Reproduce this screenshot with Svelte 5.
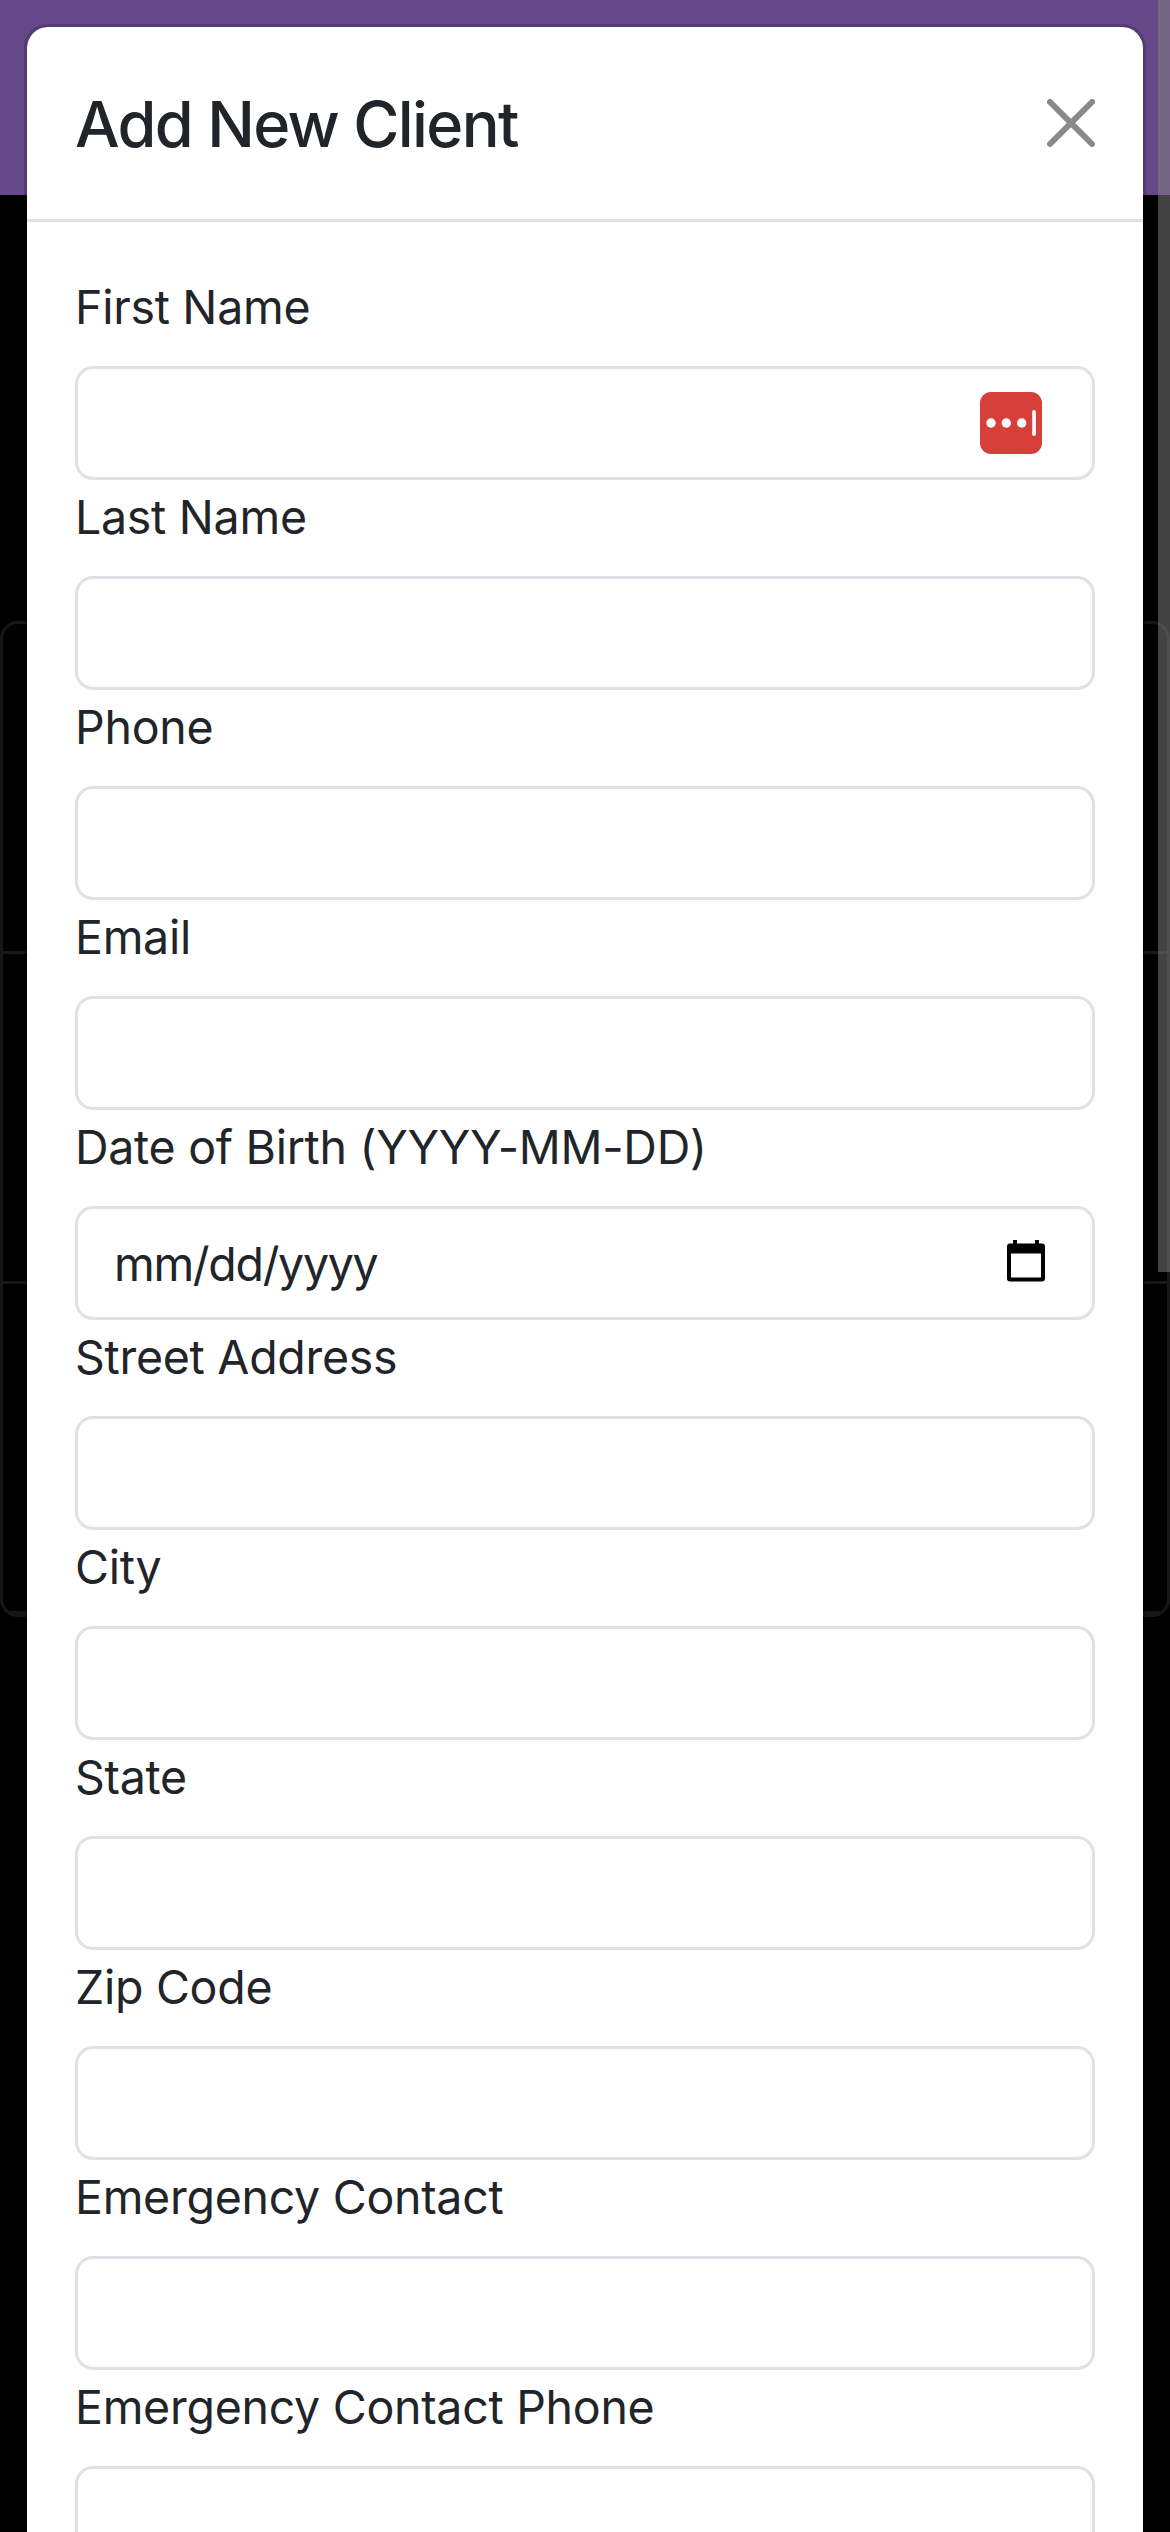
<script>
  const fields = [
    { label: 'First Name', kind: 'password-manager' },
    { label: 'Last Name' },
    { label: 'Phone' },
    { label: 'Email' },
    { label: 'Date of Birth (YYYY-MM-DD)', kind: 'date' },
    { label: 'Street Address' },
    { label: 'City' },
    { label: 'State' },
    { label: 'Zip Code' },
    { label: 'Emergency Contact' },
    { label: 'Emergency Contact Phone' },
  ];
</script>

<div class="screen">
  <div class="page">
    <div class="navbar"></div>
    <div class="card">
      <div class="card-row"></div>
      <div class="card-row"></div>
      <div class="card-row"></div>
    </div>
  </div>

  <div class="modal">
    <header class="modal-header">
      <h4 class="title">Add New Client</h4>
      <svg class="close" viewBox="0 0 16 16" aria-label="Close">
        <path d="M.293.293a1 1 0 0 1 1.414 0L8 6.586 14.293.293a1 1 0 1 1 1.414 1.414L9.414 8l6.293 6.293a1 1 0 0 1-1.414 1.414L8 9.414l-6.293 6.293a1 1 0 0 1-1.414-1.414L6.586 8 .293 1.707a1 1 0 0 1 0-1.414z" />
      </svg>
    </header>
    <div class="modal-body">
      {#each fields as field}
        <div class="label"><span>{field.label}</span></div>
        <div class="control">
          {#if field.kind === 'date'}
            <span class="value">mm/dd/yyyy</span>
            <svg class="calendar" viewBox="0 0 38 42">
              <path fill-rule="evenodd" d="M6 0h4v3.500h18V0h4v3.500h3a3 3 0 0 1 3 3V38.500a3 3 0 0 1-3 3H3a3 3 0 0 1-3-3V6.500a3 3 0 0 1 3-3h3zM4 13.500v24h30v-24z" />
            </svg>
          {:else if field.kind === 'password-manager'}
            <svg class="pm" viewBox="0 0 62 62">
              <rect width="62" height="62" rx="11" fill="#d73f3a" />
              <circle cx="11" cy="31" r="4.700" fill="#fff" />
              <circle cx="26.300" cy="31" r="4.700" fill="#fff" />
              <circle cx="41.700" cy="31" r="4.700" fill="#fff" />
              <rect x="52.200" y="18" width="3.600" height="26" rx="1.800" fill="#fff" />
            </svg>
          {/if}
        </div>
      {/each}
    </div>
  </div>

  <div class="scrollbar"></div>
</div>

<style>
  :global(body) {
    margin: 0;
    background: #000;
  }
  .screen {
    position: relative;
    width: 1170px;
    height: 2532px;
    overflow: hidden;
    background: #000;
    color: #212529;
    font-family: Inter, 'Liberation Sans', sans-serif;
  }
  .navbar {
    height: 195px;
    background: #664889;
  }
  .card {
    box-sizing: border-box;
    margin-top: 426px;
    border: 3px solid #171717;
    border-radius: 18px;
    overflow: hidden;
  }
  .card-row {
    box-sizing: border-box;
    height: 330px;
    border-bottom: 3px solid #171717;
  }
  .modal {
    position: absolute;
    top: 24px;
    left: 24px;
    right: 24px;
    height: 2700px;
    box-sizing: border-box;
    border: 3px solid rgba(0, 0, 0, 0.175);
    border-radius: 24px;
    background: #fff;
    background-clip: padding-box;
  }
  .modal-header {
    display: flex;
    align-items: center;
    justify-content: space-between;
    box-sizing: border-box;
    height: 195px;
    padding: 0 48px;
    border-bottom: 3px solid #dee2e6;
  }
  .title {
    margin: 0;
    padding-top: 2px;
    font-size: 63px;
    line-height: 96px;
    font-weight: 500;
    letter-spacing: -1.65px;
  }
  .close {
    width: 48px;
    height: 48px;
    fill: #000;
    opacity: 0.46;
  }
  .modal-body {
    padding: 48px;
  }
  .label {
    height: 72px;
    margin-bottom: 24px;
    font-size: 46.5px;
    line-height: 74px;
    letter-spacing: -0.28px;
    white-space: nowrap;
  }
  .control {
    display: flex;
    align-items: center;
    justify-content: space-between;
    box-sizing: border-box;
    height: 114px;
    padding: 0 50px 0 36px;
    border: 3px solid #dee2e6;
    border-radius: 18px;
  }
  .value {
    padding-top: 2px;
    font-size: 46.5px;
    line-height: 72px;
    letter-spacing: -1.3px;
  }
  .calendar {
    display: block;
    width: 38px;
    height: 42px;
    margin-bottom: 5px;
    margin-right: -3px;
  }
  .pm {
    width: 62px;
    height: 62px;
    margin-left: auto;
  }
  .scrollbar {
    position: absolute;
    top: 0;
    right: 0;
    width: 12px;
    height: 1272px;
    background: rgba(128, 128, 128, 0.52);
  }
</style>
